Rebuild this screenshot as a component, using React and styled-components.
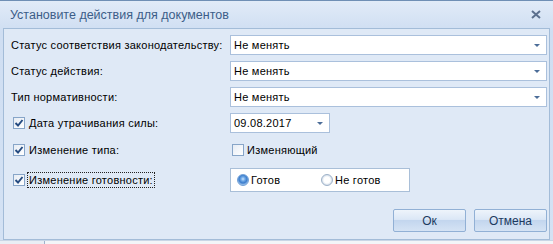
import React from 'react'
import styled, { createGlobalStyle } from 'styled-components'

const GlobalStyle = createGlobalStyle`
  html, body {
    margin: 0;
    padding: 0;
    background: #eef2f7;
  }
  body {
    font-family: "Liberation Sans", Arial, sans-serif;
    font-size: 11px;
    letter-spacing: 0.25px;
    color: #000;
  }
`;

const Screen = styled.div`
  width: 553px;
  height: 244px;
  overflow: hidden;
  display: flex;
  flex-direction: column;
`;

const Window = styled.div`
  height: 240px;
  display: flex;
  flex-direction: column;
  border-top: 1px solid #6f8fb5;
  background: linear-gradient(to bottom, #e1ebf8 0%, #cfdef2 30px, #d4e2f4 100%);
  box-sizing: border-box;
`;

const TitleBar = styled.div`
  height: 27px;
  display: flex;
  align-items: center;
  justify-content: space-between;
  padding: 0 10px 0 10px;
  box-sizing: border-box;
`;

const Title = styled.div`
  font-family: "Liberation Sans", Arial, sans-serif;
  font-size: 12.5px;
  letter-spacing: 0;
  color: #3c5d88;
  padding-top: 1px;
`;

const CloseIcon = styled.svg`
  width: 10px;
  height: 9px;
  margin-right: 2px;
`;

const Panel = styled.div`
  flex: 1;
  margin: 0 3px 0 3px;
  border: 1px solid #a3bcd8;
  background: #dfe9f6;
  padding: 6px 2px 0 7px;
  display: flex;
  flex-direction: column;
  box-sizing: border-box;
`;

const Row = styled.div`
  display: grid;
  grid-template-columns: 219px 1fr;
  align-items: center;
  height: ${p => p.$h || 20}px;
  margin-top: ${p => p.$top || 0}px;
`;

const Label = styled.div`
  display: flex;
  align-items: center;
  gap: 4px;
  padding-left: ${p => (p.$check ? 2 : 0)}px;
  white-space: nowrap;
`;

const LabelText = styled.span`
  padding: 1px 1px;
  border: 1px dotted ${p => (p.$focus ? '#222' : 'transparent')};
  margin-left: -2px;
`;

const Combo = styled.div`
  width: ${p => p.$w ? `${p.$w}px` : 'auto'};
  height: 20px;
  display: flex;
  align-items: center;
  justify-content: space-between;
  background: #fff;
  border: 1px solid #aac0dc;
  box-sizing: border-box;
  padding: 0 6px 0 3px;
`;

const Arrow = styled.span`
  width: 0;
  height: 0;
  border-left: 3px solid transparent;
  border-right: 3px solid transparent;
  border-top: 3px solid #4c6d98;
`;

const Box = styled.span`
  width: 12px;
  height: 12px;
  box-sizing: border-box;
  border: 1px solid #87a5c8;
  background: linear-gradient(135deg, #e6ecf4, #ffffff);
  display: inline-flex;
  align-items: center;
  justify-content: center;
  flex-shrink: 0;
`;

const CheckInline = styled.div`
  display: flex;
  align-items: center;
  gap: 3px;
  padding-left: 2px;
`;

const RadioGroup = styled.div`
  width: 180px;
  height: 24px;
  box-sizing: border-box;
  background: #fff;
  border: 1px solid #a9bfd8;
  display: flex;
  align-items: center;
  padding-left: 6px;
`;

const RadioItem = styled.label`
  display: flex;
  align-items: center;
  gap: 2px;
  width: ${p => p.$w}px;
`;

const Radio = styled.span`
  width: 12px;
  height: 12px;
  border-radius: 50%;
  box-sizing: border-box;
  flex-shrink: 0;
  border: 1px solid ${p => (p.$on ? '#6f9fd6' : '#9db1c8')};
  background: ${p =>
    p.$on
      ? 'radial-gradient(circle at 50% 40%, #cfe6ff 0, #6fa9e6 2px, #3b7ccc 4px, #a9cbef 6px)'
      : 'radial-gradient(circle at 50% 50%, #ffffff 0, #ffffff 3px, #d5dfeb 5px, #f2f5f9 6px)'};
`;

const Footer = styled.div`
  display: flex;
  justify-content: flex-end;
  gap: 8px;
  margin-top: 17px;
`;

const Button = styled.button`
  width: 73px;
  height: 23px;
  border: 1px solid #91b0d5;
  border-radius: 2px;
  background: linear-gradient(to bottom, #eef4fb 0%, #dbe7f6 45%, #c3d6ee 50%, #d5e3f4 100%);
  font-family: "Liberation Sans", Arial, sans-serif;
  font-size: 12px;
  color: #1d3a5f;
  padding: 0;
`;

const Backdrop = styled.div`
  flex: 1;
  display: flex;
  align-items: stretch;
  background: #f3f5f8;
  border-top: 1px solid #c9d6e6;
  overflow: hidden;
`;

const BackTab = styled.div`
  width: 44px;
  border-right: 1px solid #9fb3cc;
  background: #e9eef5;
`;

function CheckBox({ checked }) {
  return (
    <Box>
      {checked && (
        <svg width="10" height="10" viewBox="0 0 10 10">
          <path d="M1.5 5 L4 7.5 L8.5 2" fill="none" stroke="#244a80" strokeWidth="1.9" />
        </svg>
      )}
    </Box>
  )
}

export default function App() {
  return (
    <Screen>
      <GlobalStyle />
      <Window>
        <TitleBar>
          <Title>Установите действия для документов</Title>
          <CloseIcon viewBox="0 0 10 9">
            <path d="M1 1 L9 8 M9 1 L1 8" stroke="#5b6f8d" strokeWidth="2" />
          </CloseIcon>
        </TitleBar>
        <Panel>
          <Row>
            <Label>Статус соответствия законодательству:</Label>
            <Combo>Не менять<Arrow /></Combo>
          </Row>
          <Row $top={6}>
            <Label>Статус действия:</Label>
            <Combo>Не менять<Arrow /></Combo>
          </Row>
          <Row $top={6}>
            <Label>Тип нормативности:</Label>
            <Combo>Не менять<Arrow /></Combo>
          </Row>
          <Row $top={6}>
            <Label $check><CheckBox checked /><LabelText>Дата утрачивания силы:</LabelText></Label>
            <Combo $w={100}>09.08.2017<Arrow /></Combo>
          </Row>
          <Row $top={7}>
            <Label $check><CheckBox checked /><LabelText>Изменение типа:</LabelText></Label>
            <CheckInline><CheckBox /><span>Изменяющий</span></CheckInline>
          </Row>
          <Row $top={8} $h={24}>
            <Label $check><CheckBox checked /><LabelText $focus>Изменение готовности:</LabelText></Label>
            <RadioGroup>
              <RadioItem $w={84}><Radio $on />Готов</RadioItem>
              <RadioItem $w={80}><Radio />Не готов</RadioItem>
            </RadioGroup>
          </Row>
          <Footer>
            <Button>Ок</Button>
            <Button>Отмена</Button>
          </Footer>
        </Panel>
      </Window>
      <Backdrop>
        <BackTab />
      </Backdrop>
    </Screen>
  )
}
